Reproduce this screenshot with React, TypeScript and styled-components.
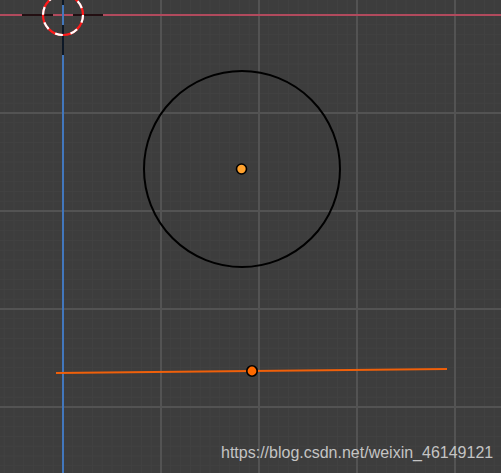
import React from "react";
import styled, { createGlobalStyle } from "styled-components";

const Global = createGlobalStyle`
  html, body { margin: 0; padding: 0; background: #3d3d3d; }
  body { font-family: "Liberation Sans", Arial, sans-serif; }
`;

const Viewport = styled.div`
  position: relative;
  width: 501px;
  height: 473px;
  overflow: hidden;
  background: #3d3d3d;
`;

const Canvas = styled.svg`
  display: block;
  width: 501px;
  height: 473px;
`;

const Watermark = styled.div`
  position: absolute;
  left: 221px;
  top: 443px;
  font-family: "Liberation Sans", Arial, sans-serif;
  font-size: 16px;
  line-height: 20px;
  color: #c4c4c4;
  white-space: nowrap;
`;

const W = 501;
const H = 473;
const OX = 63;
const OY = 15;
const MAJOR = 98;
const MINOR = MAJOR / 10;

function range(start: number, end: number, step: number) {
  const out: number[] = [];
  for (let v = start; v <= end; v += step) out.push(v);
  return out;
}

const minorX = range(OX - MINOR * 7, W, MINOR);
const minorY = range(OY, H, MINOR);
const majorX = range(OX + MAJOR, W, MAJOR);
const majorY = range(OY + MAJOR, H, MAJOR);

export default function App() {
  return (
    <>
      <Global />
      <Viewport>
        <Canvas viewBox={`0 0 ${W} ${H}`}>
          {minorX.map((x) => (
            <line key={"mx" + x} x1={x} y1={0} x2={x} y2={H} stroke="#424242" strokeWidth={1} />
          ))}
          {minorY.map((y) => (
            <line key={"my" + y} x1={0} y1={y} x2={W} y2={y} stroke="#424242" strokeWidth={1} />
          ))}
          {majorX.map((x) => (
            <line key={"Mx" + x} x1={x} y1={0} x2={x} y2={H} stroke="#535353" strokeWidth={2} />
          ))}
          {majorY.map((y) => (
            <line key={"My" + y} x1={0} y1={y} x2={W} y2={y} stroke="#535353" strokeWidth={2} />
          ))}
          {/* axes */}
          <line x1={0} y1={OY} x2={W} y2={OY} stroke="#b14a5d" strokeWidth={2} />
          <line x1={OX} y1={0} x2={OX} y2={H} stroke="#4277bd" strokeWidth={2} />

          {/* circle object */}
          <circle cx={242} cy={169} r={98} fill="none" stroke="#000" strokeWidth={2} />
          <circle cx={241.5} cy={169} r={5} fill="#ffa22e" stroke="#000" strokeWidth={1.6} />

          {/* orange line object */}
          <line x1={56} y1={373} x2={447} y2={369} stroke="#f0600a" strokeWidth={2} />
          <circle cx={252} cy={371} r={5.2} fill="#ff6a00" stroke="#000" strokeWidth={1.6} />

          {/* 3D cursor */}
          <g stroke="#000" strokeWidth={1.6}>
            <line x1={OX - 41} y1={OY} x2={OX - 10} y2={OY} />
            <line x1={OX + 10} y1={OY} x2={OX + 40} y2={OY} />
            <line x1={OX} y1={OY + 10} x2={OX} y2={OY + 40} />
            <line x1={OX} y1={OY - 40} x2={OX} y2={OY - 10} />
          </g>
          <circle cx={OX} cy={OY} r={20} fill="none" stroke="#ff1a1a" strokeWidth={2.2} />
          <circle
            cx={OX}
            cy={OY}
            r={20}
            fill="none"
            stroke="#ffffff"
            strokeWidth={2.2}
            strokeDasharray="7.85 7.85"
          />
        </Canvas>
        <Watermark>https://blog.csdn.net/weixin_46149121</Watermark>
      </Viewport>
    </>
  );
}
